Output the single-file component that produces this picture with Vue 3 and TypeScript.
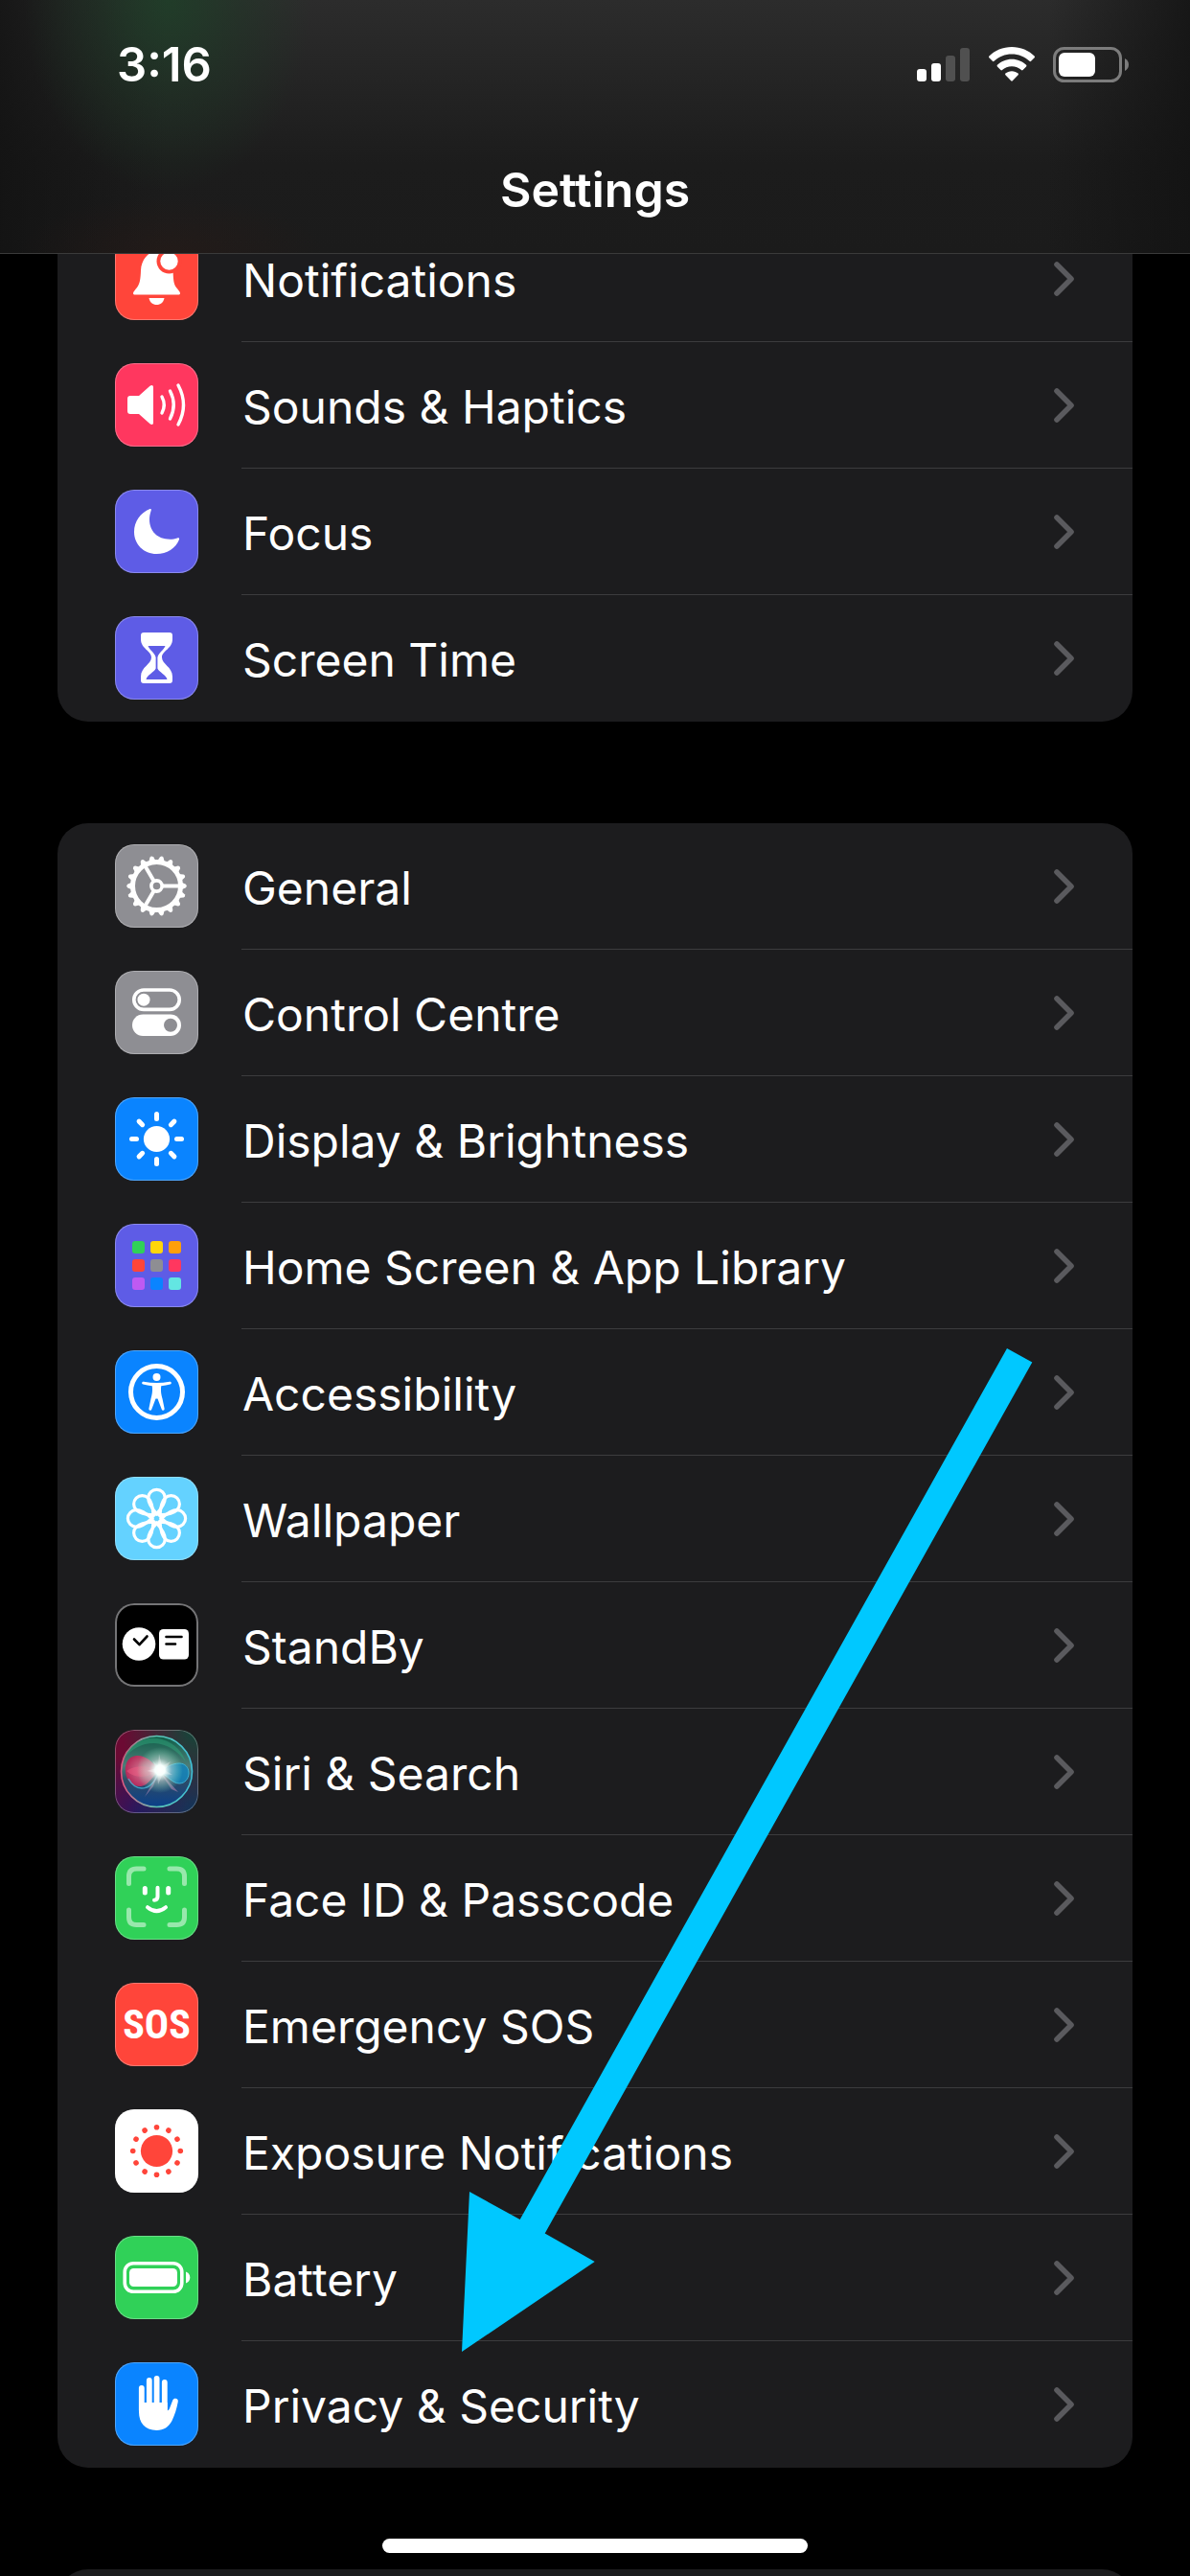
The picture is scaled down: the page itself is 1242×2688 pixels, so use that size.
<script setup lang="ts">
interface SettingRow {
  icon: string
  tone: string
  label: string
}

const groups: SettingRow[][] = [
  [
    { icon: 'bell', tone: 'red', label: 'Notifications' },
    { icon: 'speaker', tone: 'pink', label: 'Sounds & Haptics' },
    { icon: 'moon', tone: 'indigo', label: 'Focus' },
    { icon: 'hourglass', tone: 'indigo', label: 'Screen Time' },
  ],
  [
    { icon: 'gear', tone: 'gray', label: 'General' },
    { icon: 'toggles', tone: 'gray', label: 'Control Centre' },
    { icon: 'sun', tone: 'blue', label: 'Display & Brightness' },
    { icon: 'grid', tone: 'indigo', label: 'Home Screen & App Library' },
    { icon: 'person', tone: 'blue', label: 'Accessibility' },
    { icon: 'flower', tone: 'sky', label: 'Wallpaper' },
    { icon: 'standby', tone: 'black', label: 'StandBy' },
    { icon: 'siri', tone: 'siri', label: 'Siri & Search' },
    { icon: 'face', tone: 'green', label: 'Face ID & Passcode' },
    { icon: 'sos', tone: 'red', label: 'Emergency SOS' },
    { icon: 'exposure', tone: 'white', label: 'Exposure Notifications' },
    { icon: 'battery', tone: 'green', label: 'Battery' },
    { icon: 'hand', tone: 'blue', label: 'Privacy & Security' },
  ],
]

const appColours: string[] = [
  '#30d158', '#ffd60a', '#ff9f0a',
  '#ff453a', '#8e8e93', '#ff375f',
  '#bf5af2', '#0a84ff', '#63e6e2',
]

const steps = (count: number): number[] =>
  Array.from({ length: count }, (_, i) => (i * 360) / count)
</script>

<template>
  <div class="screen">
    <header class="top">
      <div class="status">
        <span class="time">3:16</span>
        <div class="signals">
          <svg width="56" height="38" viewBox="0 0 56 38" aria-hidden="true">
            <rect x="0" y="23" width="10" height="13" rx="3" fill="#fff" />
            <rect x="15" y="17" width="10" height="19" rx="3" fill="#fff" />
            <rect x="30" y="9" width="10" height="27" rx="3" fill="#505050" />
            <rect x="45" y="1" width="10" height="35" rx="3" fill="#505050" />
          </svg>
          <svg width="48" height="38" viewBox="0 0 48 38" aria-hidden="true" fill="#fff">
            <path d="M24 0C14.700 0 6.200 3.600 .4 9.600c-.5.500-.5 1.100 0 1.600l3.500 3.600c.5.500 1.100.5 1.600 0C10.300 10.200 16.800 7.500 24 7.500s13.700 2.700 18.500 7.300c.5.500 1.100.5 1.600 0l3.500-3.600c.5-.5.5-1.100 0-1.600C41.800 3.600 33.300 0 24 0z" />
            <path d="M24 12.700c-5.900 0-11.200 2.300-15.100 6.100-.5.500-.5 1.100 0 1.600l3.500 3.600c.5.500 1.100.5 1.600 0 2.600-2.400 6.100-3.800 10-3.800s7.400 1.400 10 3.800c.5.500 1.100.5 1.600 0l3.500-3.600c.5-.5.5-1.100 0-1.600C35.200 15 29.900 12.700 24 12.700z" />
            <path d="M24 25.200c-2.600 0-4.900.9-6.600 2.400-.5.500-.5 1.100 0 1.600l5.800 6.100c.5.500 1.100.5 1.600 0l5.800-6.100c.5-.5.5-1.100 0-1.600-1.700-1.500-4-2.400-6.600-2.400z" />
          </svg>
          <svg width="80" height="38" viewBox="0 0 80 38" aria-hidden="true">
            <rect x="1.500" y="1.500" width="69" height="34" rx="10" fill="none" stroke="#7c7c7c" stroke-width="3" />
            <rect x="6" y="6" width="38" height="25" rx="6" fill="#fff" />
            <path d="M75 12c2.700 1.300 4 3.600 4 6.500s-1.300 5.200-4 6.500z" fill="#7c7c7c" />
          </svg>
        </div>
      </div>
      <h1 class="title">Settings</h1>
    </header>

    <main class="list">
      <ul v-for="(rows, g) in groups" :key="g" class="group">
        <li v-for="row in rows" :key="row.label">
          <a href="#" class="row">
            <span class="tile" :class="`tile--${row.tone}`">
              <span v-if="row.icon === 'sos'" class="sos">SOS</span>
              <svg v-else viewBox="0 0 87 87" class="glyph" aria-hidden="true">
                <g v-if="row.icon === 'bell'" fill="#fff">
                  <path d="M43.500 15c-9 1-16 9-16.500 20-.3 9-1 14-4 18-2 2.600-4 4.500-4 6 0 1 .8 1.500 2 1.500h45c1.200 0 2-.5 2-1.500 0-1.500-2-3.400-4-6-3-4-3-9-3.500-18-.5-11-7-19-17-20z" />
                  <path d="M35.500 64h16c-.8 4.500-4 7-8 7s-7.200-2.500-8-7z" />
                  <circle cx="56.500" cy="25.500" r="13" fill="#ff453a" />
                  <circle cx="56.500" cy="25.500" r="9.200" />
                </g>
                <g v-else-if="row.icon === 'speaker'" fill="none" stroke="#fff" stroke-width="3.400" stroke-linecap="round">
                  <path d="M16 34h9l11.500-10.300c1.800-1.400 3.500-.8 3.500 1.300v37c0 2.100-1.700 2.700-3.500 1.300L25 53h-9c-2 0-3-1-3-3V37c0-2 1-3 3-3z" fill="#fff" stroke="none" />
                  <path d="M49 35q4.500 8.500 0 17M57.500 29q7.500 14.500 0 29M66 23q11 20.500 0 41" />
                </g>
                <path v-else-if="row.icon === 'moon'" fill="#fff" d="M36.500 20C26.500 24 20 33 20 44c0 13 10 23 23.500 23C54 67 63.500 61 67 52c.5-1.500-.4-2.200-2-1.600-2.200.8-5 1.300-7.500 1.300C44 51.700 36 43 36 31c0-3 .6-6 1.600-9 .6-1.600.2-2.400-1.100-2z" />
                <path v-else-if="row.icon === 'hourglass'" fill="#fff" fill-rule="evenodd" d="M30 17h27c2 0 3 1 3 3v4c0 10-11 12-11 19s11 10 11 20v4c0 2-1 3-3 3H30c-2 0-3-1-3-3v-4c0-10 11-13 11-20S27 34 27 24v-4c0-2 1-3 3-3zM34.500 31c1.500 4.500 7.200 7 8.100 12v11.500C41 58.500 33.500 61 32.500 66h22c-1-5-8.500-7.500-10.100-11.500V43c.9-5 6.600-7.500 8.100-12z" />
                <g v-else-if="row.icon === 'gear'" fill="none" stroke="#fff">
                  <circle cx="43.500" cy="43.500" r="25" stroke-width="5" />
                  <circle cx="43.500" cy="43.500" r="5.600" stroke-width="3.600" />
                  <path v-for="a in steps(3)" :key="a" d="M50 43.500h17" stroke-width="4" :transform="`rotate(${a} 43.500 43.500)`" />
                  <path v-for="a in steps(18)" :key="`t${a}`" d="M69 39.500l5 2.200q1.800 1.800 0 3.600l-5 2.200z" fill="#fff" stroke="none" :transform="`rotate(${a} 43.500 43.500)`" />
                </g>
                <g v-else-if="row.icon === 'toggles'" fill="none" stroke="#fff" stroke-width="3.600">
                  <rect x="19.800" y="20" width="47.400" height="20.400" rx="10.200" />
                  <circle cx="30" cy="30.200" r="6.500" fill="#fff" stroke="none" />
                  <rect x="18" y="45.500" width="51" height="22.500" rx="11.200" fill="#fff" stroke="none" />
                  <circle cx="58" cy="56.800" r="7" fill="#8e8e93" stroke="none" />
                </g>
                <g v-else-if="row.icon === 'sun'" fill="#fff" stroke="#fff" stroke-width="5" stroke-linecap="round">
                  <circle cx="43.500" cy="43.500" r="13.600" stroke="none" />
                  <path v-for="a in steps(8)" :key="a" d="M43.500 17.500v5" :transform="`rotate(${a} 43.500 43.500)`" />
                </g>
                <g v-else-if="row.icon === 'grid'">
                  <rect v-for="(c, i) in appColours" :key="c" :x="18 + (i % 3) * 19" :y="18 + Math.floor(i / 3) * 19" width="13" height="13" rx="3" :fill="c" />
                </g>
                <g v-else-if="row.icon === 'person'" fill="#fff">
                  <circle cx="43.500" cy="43.500" r="27" fill="none" stroke="#fff" stroke-width="5" />
                  <circle cx="43.500" cy="28" r="4" />
                  <path d="M30 32.700c9 1.800 18 1.800 27 0 2-.3 2.500 2.300.6 2.800-3 .8-6 1.300-9.400 1.700-.6 6 .2 9 1.300 13.300l2.100 10.300c.4 2.100-2.200 2.700-2.900.6L44.500 50.500h-2l-4.200 10.900c-.7 2.100-3.300 1.500-2.900-.6l2.100-10.300c1.100-4.300 1.900-7.300 1.300-13.300-3.400-.4-6.400-.9-9.400-1.700-1.900-.5-1.400-3.100.6-2.800z" />
                </g>
                <g v-else-if="row.icon === 'flower'" fill="none" stroke="#fff" stroke-width="3.200">
                  <circle cx="43.500" cy="43.500" r="4.600" />
                  <path v-for="a in steps(8)" :key="a" d="M43.500 38.500C38.500 33 34.700 28 34.700 22.200a8.800 8.800 0 0 1 17.600 0c0 5.800-3.800 10.800-8.800 16.300z" :transform="`rotate(${a} 43.500 43.500)`" />
                </g>
                <g v-else-if="row.icon === 'standby'" fill="none" stroke="#000" stroke-width="2.600" stroke-linecap="round" stroke-linejoin="round">
                  <circle cx="25" cy="42.500" r="17.300" fill="#fff" stroke="none" />
                  <path d="M20 37.500l5.500 5.700 8-8.700" />
                  <rect x="46" y="27" width="31" height="31.500" rx="4.500" fill="#fff" stroke="none" />
                  <path d="M53.500 35h16M53.500 42.500h9.500" />
                </g>
                <g v-else-if="row.icon === 'siri'">
                  <defs>
                    <radialGradient id="siriFlash" cx=".5" cy=".5" r=".5">
                      <stop offset="0" stop-color="#fff" />
                      <stop offset=".22" stop-color="#f4fffc" />
                      <stop offset=".5" stop-color="#cfe6df" stop-opacity=".5" />
                      <stop offset="1" stop-color="#8fc" stop-opacity="0" />
                    </radialGradient>
                    <linearGradient id="siriOrb" x1="0" y1="0" x2="0" y2="1">
                      <stop offset="0" stop-color="#0f5e48" />
                      <stop offset=".42" stop-color="#4d7d78" />
                      <stop offset=".62" stop-color="#2e4c66" />
                      <stop offset="1" stop-color="#0a3f8a" />
                    </linearGradient>
                    <linearGradient id="siriRim" x1="0" y1="0" x2="1" y2="0">
                      <stop offset="0" stop-color="#e2557f" />
                      <stop offset=".5" stop-color="#5cc6b4" />
                      <stop offset="1" stop-color="#3fc0d8" />
                    </linearGradient>
                    <radialGradient id="siriRed" cx=".6" cy=".5" r=".6">
                      <stop offset="0" stop-color="#f08aa5" />
                      <stop offset="1" stop-color="#c81e54" />
                    </radialGradient>
                  </defs>
                  <circle cx="43.500" cy="43.500" r="37" fill="url(#siriOrb)" stroke="url(#siriRim)" stroke-width="1.600" />
                  <path d="M9 30c7-18 25-24 40-20 14 4 22 14 25 24-9-13-20-19-33-20-14 0-23 6-32 16z" fill="#2fa37a" opacity=".5" />
                  <path d="M46 42C38 31 30 26 22 27 14 28 10 35 11 44c1 10 8 16 16 15 8-1 12-10 19-17z" fill="url(#siriRed)" opacity=".85" />
                  <path d="M12 43c10-7 24-5 33-1-10 8-23 10-33 1z" fill="#ff5f86" opacity=".4" />
                  <path d="M14 51c8 14 24 15 32-8" fill="none" stroke="#45b5d8" stroke-width="1.500" opacity=".8" />
                  <path d="M46 43c8-4 14-8 21-8 6 0 10 4 10 10s-4 11-10 11c-7 0-12-8-21-13z" fill="#1683b8" stroke="#3db8dd" stroke-width="1" opacity=".9" />
                  <path d="M46 43l20 22-7-3zM46 43L31 70l9-11z" fill="#d69ac6" opacity=".45" />
                  <circle cx="47" cy="42" r="24" fill="url(#siriFlash)" />
                  <path d="M46 25l3 13 9-5-6 9 8 5-10-1-5 11-1-12-11-2 10-3-4-8 6 6z" fill="#fff" opacity=".3" />
                </g>
                <g v-else-if="row.icon === 'face'" fill="none" stroke="#fff" stroke-width="5" stroke-linecap="round">
                  <path opacity=".5" d="M14.500 28.500V21q0-8 8-8h7.500M57 13h7.500q8 0 8 8v7.500M14.500 56v7.500q0 8 8 8h7.500M57 71.500h7.500q8 0 8-8V56" />
                  <path d="M31.300 33.500v4.500M55.700 33.500v4.500" />
                  <path d="M44.500 32.800V42q0 3.700-3.500 3.700M34 53.200q9.500 7.800 19 0" stroke-width="4" />
                </g>
                <g v-else-if="row.icon === 'exposure'" fill="#ff453a">
                  <circle cx="43.500" cy="43.500" r="16.600" />
                  <circle v-for="a in steps(12)" :key="a" cx="43.500" cy="18.700" r="2.800" :transform="`rotate(${a} 43.500 43.500)`" />
                </g>
                <g v-else-if="row.icon === 'battery'" fill="#fff">
                  <rect x="10.200" y="28.700" width="59.600" height="29.600" rx="9" fill="none" stroke="#fff" stroke-width="3.600" />
                  <rect x="15" y="34" width="50" height="19" rx="4.500" />
                  <path d="M74 37.500c2.700 1 4.300 3.300 4.300 6s-1.600 5-4.300 6z" />
                </g>
                <g v-else-if="row.icon === 'hand'" fill="#fff">
                  <path d="M27.800 26.800V50M35.800 19V50M43.600 16.800V50M51.800 20.900V50" stroke="#fff" stroke-width="5.800" stroke-linecap="round" />
                  <path d="M25 42h29.600v8.500c1.600-.2 2.200-1.800 3-4l2.700-7c1-2.700 6-2.400 5.500 1.500-1.300 7-3.400 14-6.300 20C56 67.500 51 71 43.500 71 31 71 25 62.500 25 52z" />
                </g>
              </svg>
            </span>
            <span class="body">
              <span class="label">{{ row.label }}</span>
              <svg class="chevron" width="22" height="38" viewBox="0 0 22 38" aria-hidden="true">
                <path d="M4 4l15 15L4 34" fill="none" stroke="#5a5a5e" stroke-width="5.600" stroke-linecap="round" stroke-linejoin="round" />
              </svg>
            </span>
          </a>
        </li>
      </ul>
      <div class="group group--next"></div>
    </main>

    <svg class="arrow" width="596" height="1048" viewBox="0 0 596 1048" aria-hidden="true">
      <path d="M569 0L595.300 14.600 86.700 923.500 138.700 953 0 1047 8 880 60.700 909z" fill="#00c8ff" />
    </svg>
    <div class="home-bar"></div>
  </div>
</template>

<style>
body {
  margin: 0;
  background: #000;
}
</style>

<style scoped>
.screen {
  position: relative;
  height: 100vh;
  overflow: hidden;
  background: #000;
  color: #fff;
  font-family: Inter, 'Liberation Sans', sans-serif;
}

.top {
  position: relative;
  z-index: 1;
  box-sizing: border-box;
  height: 265px;
  border-bottom: 1px solid #3a3a3a;
  background:
    radial-gradient(ellipse 150px 200px at 175px 0, rgba(29, 66, 40, 0.75), rgba(29, 60, 38, 0.4) 50%, transparent),
    radial-gradient(ellipse 160px 60px at 180px 100%, rgba(42, 26, 22, 0.5), transparent),
    linear-gradient(to right, rgba(18, 18, 18, 0.8), transparent 14%, transparent 88%, rgba(18, 18, 18, 0.8)),
    linear-gradient(#2c2c2c, #1c1c1c 65%, #1b1b1b);
}

.status {
  display: flex;
  align-items: center;
  justify-content: space-between;
  padding: 38px 63px 0 122px;
}

.time {
  font-size: 49px;
  font-weight: 600;
  line-height: 60px;
}

.signals {
  display: flex;
  gap: 19px;
}

.title {
  margin: 0;
  padding-top: 70px;
  font-size: 50px;
  font-weight: 600;
  line-height: 60px;
  text-align: center;
}

/* The list is scrolled a little way beneath the navigation bar. */
.list {
  display: flex;
  flex-direction: column;
  gap: 106px;
  margin-top: -40px;
  padding: 0 60px;
}

.group {
  margin: 0;
  padding: 0;
  border-radius: 32px;
  background: #1c1c1e;
  list-style: none;
}

.group--next {
  height: 132px;
}

.row {
  display: flex;
  align-items: center;
  gap: 45px;
  height: 132px;
  padding-left: 60px;
  color: inherit;
  text-decoration: none;
}

.tile {
  display: flex;
  flex: none;
  align-items: center;
  justify-content: center;
  width: 87px;
  height: 87px;
  margin-bottom: 1px;
  border-radius: 20px;
  box-shadow: inset 0 0 0 1px rgba(255, 255, 255, 0.28);
}

.glyph {
  width: 100%;
  height: 100%;
}

.tile--red { background: #ff453a; }
.tile--pink { background: #ff375f; }
.tile--indigo { background: #5e5ce6; }
.tile--gray { background: #8e8e93; }
.tile--blue { background: #0a84ff; }
.tile--sky { background: #64d2ff; }
.tile--green { background: #30d158; }
.tile--white { background: #fff; }
.tile--black {
  background: #000;
  box-shadow: inset 0 0 0 2px #747476;
}
.tile--siri {
  background:
    radial-gradient(circle at 100% 0, #0d4a3a, transparent 65%),
    radial-gradient(circle at 100% 100%, #0a3a5c, transparent 60%),
    radial-gradient(circle at 30% 100%, #2a1560, transparent 60%),
    #6c0a33;
}

.sos {
  font-family: 'Roboto Condensed', 'Liberation Sans Narrow', 'Open Sans Condensed', Roboto, sans-serif;
  font-size: 42px;
  font-weight: 700;
  line-height: 48px;
}

.body {
  display: flex;
  flex: 1;
  align-items: center;
  justify-content: space-between;
  box-sizing: border-box;
  height: 100%;
  padding-right: 61px;
  border-bottom: 1px solid #3c3c3e;
}

li:last-child .body {
  border-bottom-color: transparent;
}

.label {
  padding: 4px 0 0 1px;
  font-size: 48px;
  line-height: 60px;
  white-space: nowrap;
}

.arrow {
  position: absolute;
  top: 1407px;
  left: 482px;
  pointer-events: none;
}

.home-bar {
  position: absolute;
  bottom: 24px;
  left: 50%;
  width: 444px;
  height: 15px;
  border-radius: 8px;
  background: #fff;
  transform: translateX(-50%);
}
</style>
